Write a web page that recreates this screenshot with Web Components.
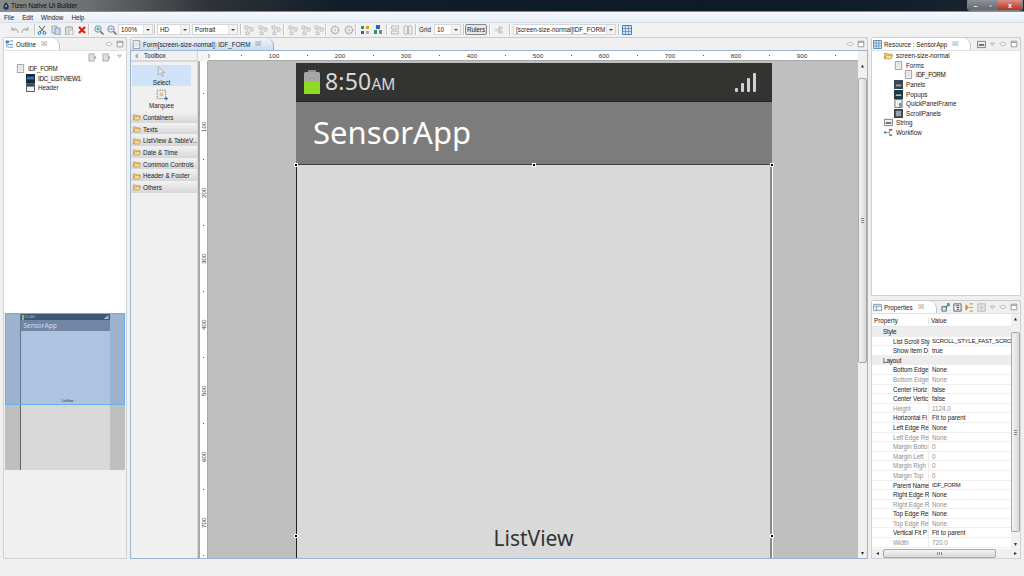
<!DOCTYPE html>
<html>
<head>
<meta charset="utf-8">
<title>Tizen Native UI Builder</title>
<style>
  html, body { margin: 0; padding: 0; background: #f0f0f0; overflow: hidden; }
  body { font: 6.3px "Liberation Sans", Arial, sans-serif; color: #222; }
</style>
</head>
<body>
<tz-app></tz-app>

<script>
const ICONS = {
  undo: '<path d="M9 8C9 4 6 3 3 4.5M3 2v3h3" fill="none" stroke="#bbb" stroke-width="1.4"/>',
  redo: '<path d="M1 8C1 4 4 3 7 4.5M7 2v3H4" fill="none" stroke="#bbb" stroke-width="1.4"/>',
  cut: '<path d="M2 1l5 6M8 1L3 7" stroke="#456" fill="none"/><circle cx="2.5" cy="8" r="1.4" fill="none" stroke="#27c"/><circle cx="7.5" cy="8" r="1.4" fill="none" stroke="#27c"/>',
  copy: '<path d="M1 1h5v7H1z" fill="#dde5ef" stroke="#9ab"/><path d="M4 3h5v7H4z" fill="#c9d8ea" stroke="#89a"/>',
  paste: '<path d="M1.5 2h7v8h-7z" fill="#ddd" stroke="#aaa"/><path d="M3.5 1h3v2h-3z" fill="#bbb"/><path d="M5 5h4v5H5z" fill="#eee" stroke="#bbb"/>',
  del: '<path d="M2 2l6 6M8 2L2 8" stroke="#d9201c" stroke-width="2.2"/>',
  zoomin: '<circle cx="4" cy="4" r="3.2" fill="#eaf2fb" stroke="#6a8fb5"/><path d="M6.5 6.5L9.5 9.5" stroke="#666" stroke-width="1.4"/><path d="M2.3 4h3.4M4 2.3v3.4" stroke="#2a6"/>',
  zoomout: '<circle cx="4" cy="4" r="3.2" fill="#eaf2fb" stroke="#6a8fb5"/><path d="M6.5 6.5L9.5 9.5" stroke="#666" stroke-width="1.4"/><path d="M2.3 4h3.4" stroke="#c55"/>',
  align: '<path d="M1 1h3v3H1zM6 3h3v3H6zM2 7h3v2.5H2z" fill="#eee" stroke="#b5b5b5" stroke-width=".8"/><path d="M4 2.5h3M3 4v3" stroke="#c4c4c4" stroke-width=".8"/>',
  gear: '<circle cx="5" cy="5" r="3.6" fill="none" stroke="#aaa" stroke-width="1.6" stroke-dasharray="1.6 .7"/><circle cx="5" cy="5" r="1.2" fill="#ccc"/>',
  tab1: '<path d="M1 1h3v3H1z" fill="#2a9a55"/><path d="M6 1h3v3H6z" fill="#d8a02a"/><path d="M1 6h3v3H1z" fill="#2b63b8"/><path d="M6 6h3v3H6z" fill="#aaa"/>',
  tab2: '<path d="M3 0h4v4H3z" fill="#2b63b8"/><path d="M1 5h3v4H1z" fill="#2a9a55"/><path d="M6 5h3v4H6z" fill="#888"/>',
  box2: '<path d="M1.5 1h7v3h-7zM1.5 6h7v3h-7z" fill="#eee" stroke="#bbb"/>',
  box3: '<path d="M1 1h3.5v8H1zM5.5 1H9v8H5.5z" fill="#eee" stroke="#bbb"/>',
  flow: '<path d="M1 5h4M5 2h3v2H5zM5 6h3v2H5zM5 3v4" fill="none" stroke="#bbb"/>',
  form: '<path d="M.5 .5h9v9h-9z" fill="#dfeaf7" stroke="#4c86c5"/><path d="M1 1h8v2H1z" fill="#3d7cc0"/><path d="M2 5h6M2 7h6" stroke="#4c86c5"/>',
  outline: '<path d="M1 1h3v2H1zM4 2h1M5.5 1H9M3 5h2M5.5 5H9M3 8h2M5.5 8H9M2 3v5" fill="#5a9bd5" stroke="#3c78b5" stroke-width=".9"/>',
  page: '<path d="M1.5 .5h7v9h-7z" fill="#f2f2f2" stroke="#999"/><path d="M3 2.5h4M3 4.5h4M3 6.5h4" stroke="#ccc" stroke-width=".7"/>',
  list: '<path d="M0 0h10v10H0z" fill="#1b2733"/><path d="M1 3h8v3H1z" fill="#2f78c8"/>',
  header: '<path d="M.5 .5h9v9h-9z" fill="#eef1f5" stroke="#445"/><path d="M1 1h8v3H1z" fill="#3a4a66"/>',
  folder: '<path d="M.5 8.5v-6h3l1 1h4V5" fill="#f3d58e" stroke="#b8892e" stroke-width=".8"/><path d="M.8 8.7l1.5-4h7.200l-1.600 4z" fill="#f7df9f" stroke="#b8892e" stroke-width=".8"/>',
  abc: '<path d="M.5 1.5h9v7h-9z" fill="#eee" stroke="#777"/><path d="M2 6.500h6v-2H2z" fill="#667"/>',
  panel: '<path d="M0 0h10v10H0z" fill="#3b4552"/><path d="M2 5h6v2H2z" fill="#9aa5b3"/>',
  popup: '<path d="M0 0h10v10H0z" fill="#1e3a46"/><path d="M2 5h6v1.500H2z" fill="#cfd8dc"/>',
  quick: '<path d="M1 .5h8v9H1z" fill="#eef1f5" stroke="#667"/><path d="M5.500 4.500h3v4h-3z" fill="#889"/>',
  scroll: '<path d="M0 0h10v10H0z" fill="#3d4248"/><path d="M2 2h6v6H2z" fill="#9aa0a6"/>',
  workflow: '<path d="M0 4h3v2H0z" fill="#28a"/><path d="M3 5h3M6 2v6" stroke="#999" fill="none"/><path d="M6 1h3v2H6z" fill="#d33"/><path d="M6 7h3v2H6z" fill="#5a3"/>',
  eye: '<path d="M1 5c2-3 6-3 8 0-2 2.500-6 2.500-8 0z" fill="#f8f8f8" stroke="#aaa"/>',
  max: '<path d="M1.500 1.500h7v7h-7z" fill="#fff" stroke="#888"/><path d="M1.500 3h7" stroke="#888"/>',
  tri: '<path d="M2 3h6L5 6.500z" fill="#fff" stroke="#999"/>',
  vmenu: '<path d="M1 1h6v8H1z" fill="#ddd" stroke="#aaa"/><path d="M7 4h2v2H7z" fill="#999"/>',
  props: '<path d="M.5 1.500h9v7h-9z" fill="#eef3f9" stroke="#7f97b2"/><path d="M1 3.500h8M4 3.500v5" stroke="#7f97b2"/>',
  grid: '<path d="M.5 .5h9v9h-9z" fill="#d6e6f5" stroke="#4b81b8"/><path d="M.5 3.500h9M.5 6.500h9M3.500 .5v9M6.500 .5v9" stroke="#4b81b8" stroke-width=".7"/>',
  newp: '<path d="M1 4h5v5H1z" fill="#cfe0f2" stroke="#567"/><path d="M5 5l3-3M6.500 1H9v2.500" stroke="#2a8f3c" fill="none" stroke-width="1.200"/>',
  tree: '<path d="M1 1h8v8H1z" fill="#fff" stroke="#456"/><path d="M3 3h4M4 5h3M4 7h3" stroke="#247"/>',
  cats: '<path d="M1 2l3 3-3 3zM5 1h4M5 5h4M5 9h4" fill="#e5a52a" stroke="#c78a17"/>',
  pick: '<path d="M1 1h8v8H1z" fill="#eee" stroke="#aaa"/><path d="M3 3h4v4H3z" fill="#ccc"/>',
  arrow: '<path d="M2 .5v8l2-2 1.500 3 1.200-.6L5.300 6H8z" fill="#e8e8e8" stroke="#999" stroke-width=".6"/>',
  marquee: '<path d="M1 1h7v7H1z" fill="#f6eed8" stroke="#6a86a8" stroke-dasharray="1.200 .8" stroke-width=".8"/><path d="M3 3h3v3H3z" fill="#dfc98a"/><path d="M7 8h3M8.500 6.500v3" stroke="#2f5f9a" stroke-width=".8"/>'
};

class TzIcon extends HTMLElement {
  constructor() {
    super();
    this.attachShadow({ mode: 'open' });
  }
  connectedCallback() {
    const name = this.getAttribute('name');
    const size = this.getAttribute('size') || 9;
    this.shadowRoot.innerHTML = `
      <style>
        :host { display: inline-flex; flex: none; width: ${size}px; height: ${size}px; }
        svg { width: 100%; height: 100%; display: block; }
      </style>
      <svg viewBox="0 0 10 10">${ICONS[name] || ''}</svg>`;
  }
}

class TzTitlebar extends HTMLElement {
  constructor() {
    super();
    this.attachShadow({ mode: 'open' });
    this.shadowRoot.innerHTML = `
      <style>
        :host { display: flex; align-items: center; height: 11px; padding-left: 3px; flex: none; position: relative;
          background: linear-gradient(90deg, #8b8b88 0, #6b6d6e 90px, #2e3338 210px, #111d29 340px, #0d1a28 700px, #0f1c2a 860px, #1e2730 1024px);
          border-bottom: 1px solid #7f8b96; color: #0b0b0b; font-size: 6.5px; }
        .logo { width: 6px; height: 8px; margin-right: 2px; }
        .win { position: absolute; right: 2px; top: 0; display: flex; height: 10px; border-radius: 0 0 3px 3px; overflow: hidden; box-shadow: 0 0 0 1px #7a8288; }
        .win span { display: flex; align-items: center; justify-content: center; color: #fff; font-size: 7px; font-weight: bold; width: 15px;
          background: linear-gradient(#8d9296, #62676b); }
        .win .x { width: 24px; background: linear-gradient(#d98f82, #b8301f); }
      </style>
      <svg class="logo" viewBox="0 0 6 8"><path d="M3 0C1 2 0 4 .5 6.500L3 8l2.500-1.500C6 4 5 2 3 0z" fill="#16365f"/><path d="M3 2l1 3H2z" fill="#9cc6ea"/></svg>
      <slot></slot>
      <div class="win"><span>–</span><span>▫</span><span class="x">x</span></div>`;
  }
}

class TzMenubar extends HTMLElement {
  constructor() {
    super();
    this.attachShadow({ mode: 'open' });
    this.shadowRoot.innerHTML = `
      <style>
        :host { display: flex; align-items: center; height: 11px; flex: none; padding-left: 4px; gap: 8px;
          background: linear-gradient(#f6f8fc, #e6edf8); border-bottom: 1px solid #d8deea; box-sizing: border-box; }
      </style>
      <slot></slot>`;
  }
}

// toolbar row: [kind, value, margin-left, width]
const TOOLBAR = [
  ['i', 'undo', 8, 12], ['i', 'redo', 0, 12], ['s', '', 2, 1],
  ['i', 'cut', 1, 12], ['i', 'copy', 2, 12], ['i', 'paste', 1, 12], ['i', 'del', 1, 12], ['s', '', 0, 1],
  ['i', 'zoomin', 4, 12], ['i', 'zoomout', 1, 12], ['c', '100%', 0, 35], ['s', '', 1, 1],
  ['c', 'HD', 2, 33], ['c', 'Portrait', 2, 46], ['s', '', 2, 1],
  ['i', 'align', 1, 13], ['i', 'align', 1, 13], ['i', 'align', 0, 13], ['s', '', 1, 1],
  ['i', 'align', 2, 13], ['i', 'align', 0, 13], ['i', 'align', 0, 13], ['s', '', 0, 1],
  ['i', 'gear', 2, 13], ['i', 'gear', 1, 13], ['s', '', 0, 1],
  ['i', 'tab1', 2, 13], ['i', 'tab2', 0, 13], ['s', '', 2, 1],
  ['i', 'box2', 1, 13], ['i', 'box3', 0, 13], ['s', '', 1, 1],
  ['t', 'Grid', 3, 14], ['c', '10', 1, 27], ['s', '', 2, 1],
  ['b', 'Rulers', 1, 22], ['s', '', 2, 1],
  ['i', 'flow', 2, 13], ['s', '', 4, 1], ['c', '[screen-size-normal]IDF_FORM', 3, 103], ['s', '', 2, 1],
  ['i', 'grid', 1, 13]
];

class TzToolbar extends HTMLElement {
  constructor() {
    super();
    this.attachShadow({ mode: 'open' });
    const html = TOOLBAR.map(([kind, val, ml, w]) => {
      const st = `margin-left:${ml}px;width:${w}px`;
      if (kind === 'i') return `<div class="ib" style="${st}"><tz-icon name="${val}" size="10"></tz-icon></div>`;
      if (kind === 's') return `<div class="sep" style="${st}"></div>`;
      if (kind === 'c') return `<div class="combo" style="${st}"><span>${val}</span><b></b></div>`;
      if (kind === 'b') return `<div class="btn" style="${st}">${val}</div>`;
      return `<div class="txt" style="${st}">${val}</div>`;
    }).join('');
    this.shadowRoot.innerHTML = `
      <style>
        :host { display: flex; align-items: center; height: 14px; flex: none; background: #f1f1f1; padding-bottom: 1px; box-sizing: border-box; }
        .ib { display: flex; align-items: center; justify-content: center; flex: none; }
        .sep { height: 11px; background: #c4c4c4; flex: none; box-shadow: 1px 0 0 #fff; }
        .combo { height: 11px; box-sizing: border-box; border: 1px solid #d6d6d6; background: #fff; display: flex; align-items: center;
          padding-left: 2px; flex: none; overflow: hidden; justify-content: space-between; white-space: nowrap; }
        .combo b { width: 8px; height: 100%; background: #f2f2f2; border-left: 1px solid #e2e2e2; position: relative; flex: none; }
        .combo b::after { content: ""; position: absolute; left: 2px; top: 4px; border: 2px solid transparent; border-top: 2px solid #444; }
        .btn { height: 11px; box-sizing: border-box; border: 1px solid #888; border-radius: 2px; background: #e8e8e8; text-align: center; line-height: 9px; flex: none; }
        .txt { flex: none; }
      </style>
      ${html}`;
  }
}

class TzView extends HTMLElement {
  constructor() {
    super();
    this.attachShadow({ mode: 'open' });
  }
  connectedCallback() {
    const active = this.hasAttribute('active');
    this.shadowRoot.innerHTML = `
      <style>
        :host { display: flex; flex-direction: column; min-height: 0; min-width: 0; box-sizing: border-box; background: #f0f0f0; }
        .bar { display: flex; align-items: flex-end; height: 13px; flex: none; background: #f0f0f0; box-sizing: border-box;
          border: 1px solid #c8ccd0; border-bottom: 0; border-radius: 3px 3px 0 0; }
        .tab { display: flex; align-items: center; gap: 2px; height: 12px; padding: 0 12px 0 1px; box-sizing: border-box; background: #fff;
          border-right: 1px solid #b9c6d6; border-top-right-radius: 8px; white-space: nowrap; }
        .tab i { color: #888; font-style: normal; font-size: 7px; margin-left: 3px; }
        .tools { display: flex; align-items: center; gap: 3px; margin-left: auto; height: 12px; padding-right: 2px; }
        .body { flex: 1; min-height: 0; display: flex; flex-direction: column; overflow: hidden;
          border: 1px solid ${active ? '#9cb4d3' : '#cfd2d6'}; border-top-color: ${active ? '#9cb4d3' : '#dfe2e6'}; }
        :host([active]) .bar { border-color: #c6ccd4; }
        :host([active]) .tab { background: linear-gradient(#eef4fb, #c9dcf1); border-right-color: #8fb0d4; }
      </style>
      <div class="bar">
        <div class="tab"><tz-icon name="${this.getAttribute('icon')}"></tz-icon>${this.getAttribute('label')}<i>☒</i></div>
        <div class="tools"><slot name="tools"></slot></div>
      </div>
      <div class="body"><slot></slot></div>`;
  }
}

class TzRow extends HTMLElement {
  constructor() {
    super();
    this.attachShadow({ mode: 'open' });
  }
  connectedCallback() {
    let st = this.hasAttribute('sel') ? 'background:#f2f2f2;border-radius:2px;padding:0 2px;margin-left:-2px;' : '';
    if (this.hasAttribute('caps')) st += 'letter-spacing:-.35px;';
    this.shadowRoot.innerHTML = `
      <style>
        :host { display: flex; align-items: center; gap: 3px; height: 9.6px; padding-left: ${this.getAttribute('indent') || 0}px; white-space: nowrap; flex: none; }
      </style>
      <tz-icon name="${this.getAttribute('icon')}"></tz-icon><span style="${st}"><slot></slot></span>`;
  }
}

class TzToolbox extends HTMLElement {
  constructor() {
    super();
    this.attachShadow({ mode: 'open' });
    const drawers = ['Containers', 'Texts', 'ListView &amp; TableV...', 'Date &amp; Time', 'Common Controls', 'Header &amp; Footer', 'Others'];
    this.shadowRoot.innerHTML = `
      <style>
        :host { display: flex; flex-direction: column; width: 67px; flex: none; box-sizing: border-box; background: #f0f0f0; border-right: 1px solid #d5d5d5; }
        .head { height: 11px; display: flex; align-items: center; padding-left: 4px; gap: 6px; border-bottom: 2px solid #d8d8d8; box-sizing: border-box; }
        .head b { width: 0; height: 0; border: 3px solid transparent; border-right-color: #aaa; border-left-width: 0; }
        .tool { display: flex; flex-direction: column; align-items: center; margin-right: 6px; margin-left: 1px; }
        .sel { height: 21px; margin-top: 3px; padding-top: 1px; background: #cfe2f8; box-sizing: border-box; justify-content: space-between; border-radius: 1px; }
        .mq { height: 23px; margin-top: 2px; justify-content: space-between; padding: 1px 0 2px; box-sizing: border-box; }
        .drawer { height: 10.7px; margin-top: 1px; display: flex; align-items: center; gap: 2px; padding-left: 2px;
          background: linear-gradient(#f0f0f0, #d6d6d6); white-space: nowrap; overflow: hidden; }
      </style>
      <div class="head"><b></b>Toolbox</div>
      <div class="tool sel"><tz-icon name="arrow" size="11"></tz-icon>Select</div>
      <div class="tool mq"><tz-icon name="marquee" size="12"></tz-icon>Marquee</div>
      ${drawers.map(d => `<div class="drawer"><tz-icon name="folder" size="8"></tz-icon>${d}</div>`).join('')}`;
  }
}

class TzRuler extends HTMLElement {
  constructor() {
    super();
    this.attachShadow({ mode: 'open' });
  }
  connectedCallback() {
    const vert = this.hasAttribute('vertical');
    const count = vert ? 16 : 20;
    let cells = '';
    for (let k = 0; k < count; k++) {
      const label = k % 2 === 0 && !(vert && k === 0) ? k * 50 : '';
      cells += `<span class="c">${label === '' ? '<u></u>' : label}</span>`;
    }
    this.shadowRoot.innerHTML = `
      <style>
        :host { display: block; overflow: hidden; background: #fff; flex: none; font-size: 6.2px; color: #333; box-sizing: border-box; }
        :host(:not([vertical])) { height: 10px; border-bottom: 1px solid #a9a9a9; }
        :host([vertical]) { width: 10px; border-left: 2px solid #a9a9a9; border-right: 1px solid #a9a9a9; }
        .t { display: flex; }
        :host(:not([vertical])) .t { margin-left: -16.5px; }
        :host([vertical]) .t { flex-direction: column; margin-top: -17.5px; }
        .c { flex: none; width: 33px; height: 9px; display: flex; align-items: center; justify-content: center; }
        :host([vertical]) .c { width: 7px; height: 33px; writing-mode: vertical-rl; transform: rotate(180deg); }
        u { display: block; width: 1px; height: 1px; background: #555; }
      </style>
      <div class="t">${cells}</div>`;
  }
}

class TzPhone extends HTMLElement {
  constructor() {
    super();
    this.attachShadow({ mode: 'open' });
    this.shadowRoot.innerHTML = `
      <style>
        :host { display: flex; flex-direction: column; width: 476px; height: 100%; flex: none; font-family: "Noto Sans", "Open Sans", sans-serif; position: relative; box-sizing: border-box; }
        .status { height: 39px; flex: none; background: #333331; color: #d8d8d8; display: flex; align-items: center; padding: 0 16px 0 7px; box-sizing: border-box; border-bottom: 1px solid #262626; }
        .time { font-size: 23px; margin: 0 0 2px 4px; letter-spacing: .2px; }
        .time small { font-size: 15.5px; letter-spacing: 0; }
        .bat { width: 18px; height: 25px; }
        .sig { width: 21px; height: 19px; margin-left: auto; }
        .head { height: 63px; flex: none; background: #7c7c7c; color: #fff; display: flex; align-items: center; padding: 0 0 2px 17px; font-size: 31px; box-sizing: border-box; border-bottom: 1px solid #3f3f3f; }
        .body { flex: 1; background: #d9d9d9; color: #333; font-size: 21px; display: flex; align-items: flex-end; justify-content: center; border-left: 1px solid #222; border-right: 2px solid #8a8a8a; box-shadow: 1px 0 0 #fff; position: relative; padding-bottom: 6px; box-sizing: border-box; }
        .h { position: absolute; width: 2px; height: 2px; background: #000; border: 1px solid #fff; box-sizing: content-box; }
      </style>
      <div class="status">
        <svg class="bat" viewBox="0 0 18 25"><path d="M5 0h8v2H5z" fill="#8f8f8f"/><rect x="1" y="2" width="16" height="22" rx="1.5" fill="#a6a6a6"/><rect x="1" y="12" width="16" height="12" fill="#8fdb22"/></svg>
        <span class="time">8:50<small>AM</small></span>
        <svg class="sig" viewBox="0 0 21 19"><rect x="0" y="15" width="3" height="4" rx="1" fill="#d0d0d0"/><rect x="6" y="10" width="3" height="9" rx="1" fill="#d0d0d0"/><rect x="12" y="5" width="3" height="14" rx="1" fill="#d0d0d0"/><rect x="18" y="0" width="3" height="19" rx="1" fill="#d0d0d0"/></svg>
      </div>
      <div class="head"><slot name="title"></slot></div>
      <div class="body">
        <slot></slot>
        <span class="h" style="left:-3px;top:-2px"></span>
        <span class="h" style="left:235px;top:-2px"></span>
        <span class="h" style="right:-4px;top:-2px"></span>
        <span class="h" style="left:-3px;bottom:20px"></span>
        <span class="h" style="right:-4px;bottom:20px"></span>
      </div>`;
  }
}

class TzScroll extends HTMLElement {
  constructor() {
    super();
    this.attachShadow({ mode: 'open' });
  }
  connectedCallback() {
    const h = this.hasAttribute('horizontal');
    const start = this.getAttribute('start') || 0;
    const len = this.getAttribute('len') || 100;
    this.shadowRoot.innerHTML = `
      <style>
        :host { display: flex; flex: none; background: #f0f0f0; flex-direction: ${h ? 'row' : 'column'}; ${h ? 'height:9px' : 'width:9px'}; }
        .a { flex: none; ${h ? 'width:10px' : 'height:10px'}; display: flex; align-items: center; justify-content: center; }
        .a i { width: 3px; height: 3px; background: #333; clip-path: polygon(50% 0, 100% 100%, 0 100%); }
        .track { flex: 1; position: relative; min-width: 0; min-height: 0; }
        .thumb { position: absolute; box-sizing: border-box; border: 1px solid #a8a8a8; border-radius: 2px; display: flex; align-items: center; justify-content: center;
          background: linear-gradient(${h ? '#f4f4f4, #d8d8d8' : '90deg, #f4f4f4, #d8d8d8'});
          ${h ? `left:${start}px;width:${len}px;top:0;bottom:0` : `top:${start}px;height:${len}px;left:0;right:0`}; }
        .thumb::after { content: ""; ${h ? 'width:5px;height:3px;background:repeating-linear-gradient(90deg,#888 0 1px,transparent 1px 2px)' : 'width:3px;height:5px;background:repeating-linear-gradient(#888 0 1px,transparent 1px 2px)'}; }
      </style>
      <div class="a"><i style="${h ? 'transform:rotate(-90deg)' : ''}"></i></div>
      <div class="track"><div class="thumb"></div></div>
      <div class="a"><i style="transform:rotate(${h ? 90 : 180}deg)"></i></div>`;
  }
}

class TzProps extends HTMLElement {
  constructor() {
    super();
    this.attachShadow({ mode: 'open' });
    // [name, value, disabled], null value marks a category row
    const rows = [
      ['Style', null], ['List Scroll Sty', 'SCROLL_STYLE_FAST_SCRO'], ['Show Item D', 'true'],
      ['Layout', null], ['Bottom Edge', 'None'], ['Bottom Edge', 'None', 1],
      ['Center Horiz', 'false'], ['Center Vertic', 'false'], ['Height', '1124.0', 1],
      ['Horizontal Fi', 'Fit to parent'], ['Left Edge Re', 'None'], ['Left Edge Re', 'None', 1],
      ['Margin Botto', '0', 1], ['Margin Left', '0', 1], ['Margin Righ', '0', 1], ['Margin Top', '0', 1],
      ['Parent Name', 'IDF_FORM'], ['Right Edge R', 'None'], ['Right Edge R', 'None', 1],
      ['Top Edge Re', 'None'], ['Top Edge Re', 'None', 1], ['Vertical Fit P', 'Fit to parent'],
      ['Width', '720.0', 1]
    ];
    const html = rows.map(([n, v, off]) => v === null
      ? `<div class="r cat"><span class="n">${n}</span></div>`
      : `<div class="r ${off ? 'off' : ''}"><span class="n">${n}</span><span class="v ${v.includes('_') ? 'caps' : ''}">${v}</span></div>`).join('');
    this.shadowRoot.innerHTML = `
      <style>
        :host { display: flex; flex-direction: column; flex: 1; min-height: 0; background: #fff; }
        .main { flex: 1; display: flex; min-height: 0; }
        .tbl { flex: 1; min-width: 0; overflow: hidden; }
        .hd { height: 13px; display: flex; align-items: center; border-bottom: 1px solid #e8e8e8; box-sizing: border-box; }
        .hd span:first-child { width: 57px; padding-left: 2px; box-sizing: border-box; border-right: 1px solid #e4e4e4; }
        .hd span:last-child { padding-left: 2px; }
        .r { height: 9.6px; line-height: 9px; display: flex; border-bottom: 1px solid #efefef; box-sizing: border-box; white-space: nowrap; }
        .n { width: 57px; flex: none; padding-left: 21px; box-sizing: border-box; border-right: 1px solid #ececec; letter-spacing: -.1px; }
        .v { padding-left: 3px; }
        .caps { font-size: 5.9px; letter-spacing: -.2px; }
        .cat { background: #ededed; color: #111; }
        .cat .n { padding-left: 11px; border-right: 0; }
        .off { color: #8f8f8f; }
      </style>
      <div class="main">
        <div class="tbl"><div class="hd"><span>Property</span><span>Value</span></div>${html}</div>
        <tz-scroll start="8" len="200"></tz-scroll>
      </div>
      <tz-scroll horizontal start="1" len="113"></tz-scroll>`;
  }
}

class TzApp extends HTMLElement {
  constructor() {
    super();
    this.attachShadow({ mode: 'open' });
    this.shadowRoot.innerHTML = `
      <style>
        :host { display: flex; flex-direction: column; width: 1024px; height: 576px; overflow: hidden; background: #f0f0f0; font: 6.3px "Liberation Sans", Arial, sans-serif; color: #222; }
        .bench { display: flex; height: 522px; padding-left: 3px; gap: 3px; flex: none; }
        .left { width: 124px; flex: none; display: flex; }
        .left tz-view { flex: 1; }
        .tree { height: 262px; background: #fff; padding-top: 13px; flex: none; display: flex; flex-direction: column; position: relative; box-sizing: border-box; }
        .vtools { position: absolute; top: 2px; right: 3px; display: flex; gap: 5px; }
        .thumb { height: 157px; flex: none; position: relative; background: #bfbfbf; display: flex; justify-content: center; margin: 0 1px; overflow: hidden; }
        .mini { width: 89px; background: #d9d9d9; border-left: 1px solid #666; display: flex; flex-direction: column; margin: 1px 0 0 -1px; }
        .mini i { height: 6px; background: #333; color: #bbb; font: 3px/6px "Noto Sans", sans-serif; padding: 0 1px; display: flex; align-items: center; gap: 1px; flex: none; }
        .mini i::before { content: ""; width: 2px; height: 5px; background: #8fdb22; }
        .mini i::after { content: ""; width: 5px; height: 4px; margin-left: auto; background: #ccc; clip-path: polygon(100% 0, 100% 100%, 0 100%); }
        .mini b { height: 11px; background: #7c7c7c; color: #fff; font: 6.5px "Noto Sans", sans-serif; display: flex; align-items: center; padding-left: 3px; box-sizing: border-box; flex: none; }
        .over { position: absolute; left: 0; right: 0; top: 0; height: 92px; background: rgba(92, 155, 235, .35); border: 1px solid #66aef2; box-sizing: border-box; font-size: 3px; color: #222; }
        .over span { position: absolute; left: 56px; bottom: 1px; }
        .rest { flex: 1; background: #f0f0f0; }
        .editor { width: 738px; flex: none; display: flex; }
        .editor tz-view { flex: 1; }
        .form { flex: 1; display: flex; min-height: 0; }
        .stage { flex: 1; min-width: 0; display: flex; min-height: 0; }
        .canvasCol { flex: 1; display: flex; flex-direction: column; min-width: 0; min-height: 0; }
        .canvas { flex: 1; min-height: 0; overflow: hidden; background: #bfbfbf; padding: 2px 0 0 88px; display: flex; box-sizing: border-box; }
        .vr { display: flex; overflow: hidden; padding-top: 10px; background: #f4f4f4; flex: none; box-sizing: border-box; }
        .stage > tz-scroll { margin-top: 10px; }
        .right { width: 150px; flex: none; display: flex; flex-direction: column; gap: 4px; }
        .res { height: 259px; flex: none; }
        .prop { height: 259px; flex: none; }
        .restree { flex: 1; background: #fff; display: flex; flex-direction: column; }
      </style>

      <tz-titlebar>Tizen Native UI Builder</tz-titlebar>
      <tz-menubar><span>File</span><span>Edit</span><span>Window</span><span>Help</span></tz-menubar>
      <tz-toolbar></tz-toolbar>

      <div class="bench">
        <div class="left">
          <tz-view icon="outline" label="Outline">
            <tz-icon slot="tools" name="eye" size="8"></tz-icon><tz-icon slot="tools" name="max" size="8"></tz-icon>
            <div class="tree">
              <div class="vtools"><tz-icon name="vmenu"></tz-icon><tz-icon name="vmenu"></tz-icon><tz-icon name="tri" size="7"></tz-icon></div>
              <tz-row icon="page" indent="12" caps>IDF_FORM</tz-row>
              <tz-row icon="list" indent="22" sel caps>IDC_LISTVIEW1</tz-row>
              <tz-row icon="header" indent="22">Header</tz-row>
            </div>
            <div class="thumb">
              <div class="mini"><i>8:50AM</i><b>SensorApp</b></div>
              <div class="over"><span>ListView</span></div>
            </div>
            <div class="rest"></div>
          </tz-view>
        </div>

        <div class="editor">
          <tz-view active icon="page" label="Form[screen-size-normal]: IDF_FORM">
            <tz-icon slot="tools" name="eye" size="8"></tz-icon><tz-icon slot="tools" name="max" size="8"></tz-icon>
            <div class="form">
              <tz-toolbox></tz-toolbox>
              <div class="stage">
                <div class="vr"><tz-ruler vertical></tz-ruler></div>
                <div class="canvasCol">
                  <tz-ruler></tz-ruler>
                  <div class="canvas">
                    <tz-phone><span slot="title">SensorApp</span>ListView</tz-phone>
                  </div>
                </div>
                <tz-scroll start="7" len="285"></tz-scroll>
              </div>
            </div>
          </tz-view>
        </div>

        <div class="right">
          <tz-view class="res" icon="grid" label="Resource : SensorApp">
            <tz-icon slot="tools" name="abc" size="9"></tz-icon><tz-icon slot="tools" name="tri" size="7"></tz-icon><tz-icon slot="tools" name="eye" size="8"></tz-icon><tz-icon slot="tools" name="max" size="8"></tz-icon>
            <div class="restree">
              <tz-row icon="folder" indent="12">screen-size-normal</tz-row>
              <tz-row icon="page" indent="22">Forms</tz-row>
              <tz-row icon="page" indent="32" sel caps>IDF_FORM</tz-row>
              <tz-row icon="panel" indent="22">Panels</tz-row>
              <tz-row icon="popup" indent="22">Popups</tz-row>
              <tz-row icon="quick" indent="22">QuickPanelFrame</tz-row>
              <tz-row icon="scroll" indent="22">ScrollPanels</tz-row>
              <tz-row icon="abc" indent="12">String</tz-row>
              <tz-row icon="workflow" indent="12">Workflow</tz-row>
            </div>
          </tz-view>
          <tz-view class="prop" icon="props" label="Properties">
            <tz-icon slot="tools" name="newp"></tz-icon><tz-icon slot="tools" name="tree"></tz-icon><tz-icon slot="tools" name="cats"></tz-icon><tz-icon slot="tools" name="pick"></tz-icon><tz-icon slot="tools" name="tri" size="7"></tz-icon><tz-icon slot="tools" name="eye" size="8"></tz-icon><tz-icon slot="tools" name="max" size="8"></tz-icon>
            <tz-props></tz-props>
          </tz-view>
        </div>
      </div>`;
  }
}

customElements.define('tz-icon', TzIcon);
customElements.define('tz-titlebar', TzTitlebar);
customElements.define('tz-menubar', TzMenubar);
customElements.define('tz-toolbar', TzToolbar);
customElements.define('tz-view', TzView);
customElements.define('tz-row', TzRow);
customElements.define('tz-toolbox', TzToolbox);
customElements.define('tz-ruler', TzRuler);
customElements.define('tz-phone', TzPhone);
customElements.define('tz-scroll', TzScroll);
customElements.define('tz-props', TzProps);
customElements.define('tz-app', TzApp);
</script>
</body>
</html>
